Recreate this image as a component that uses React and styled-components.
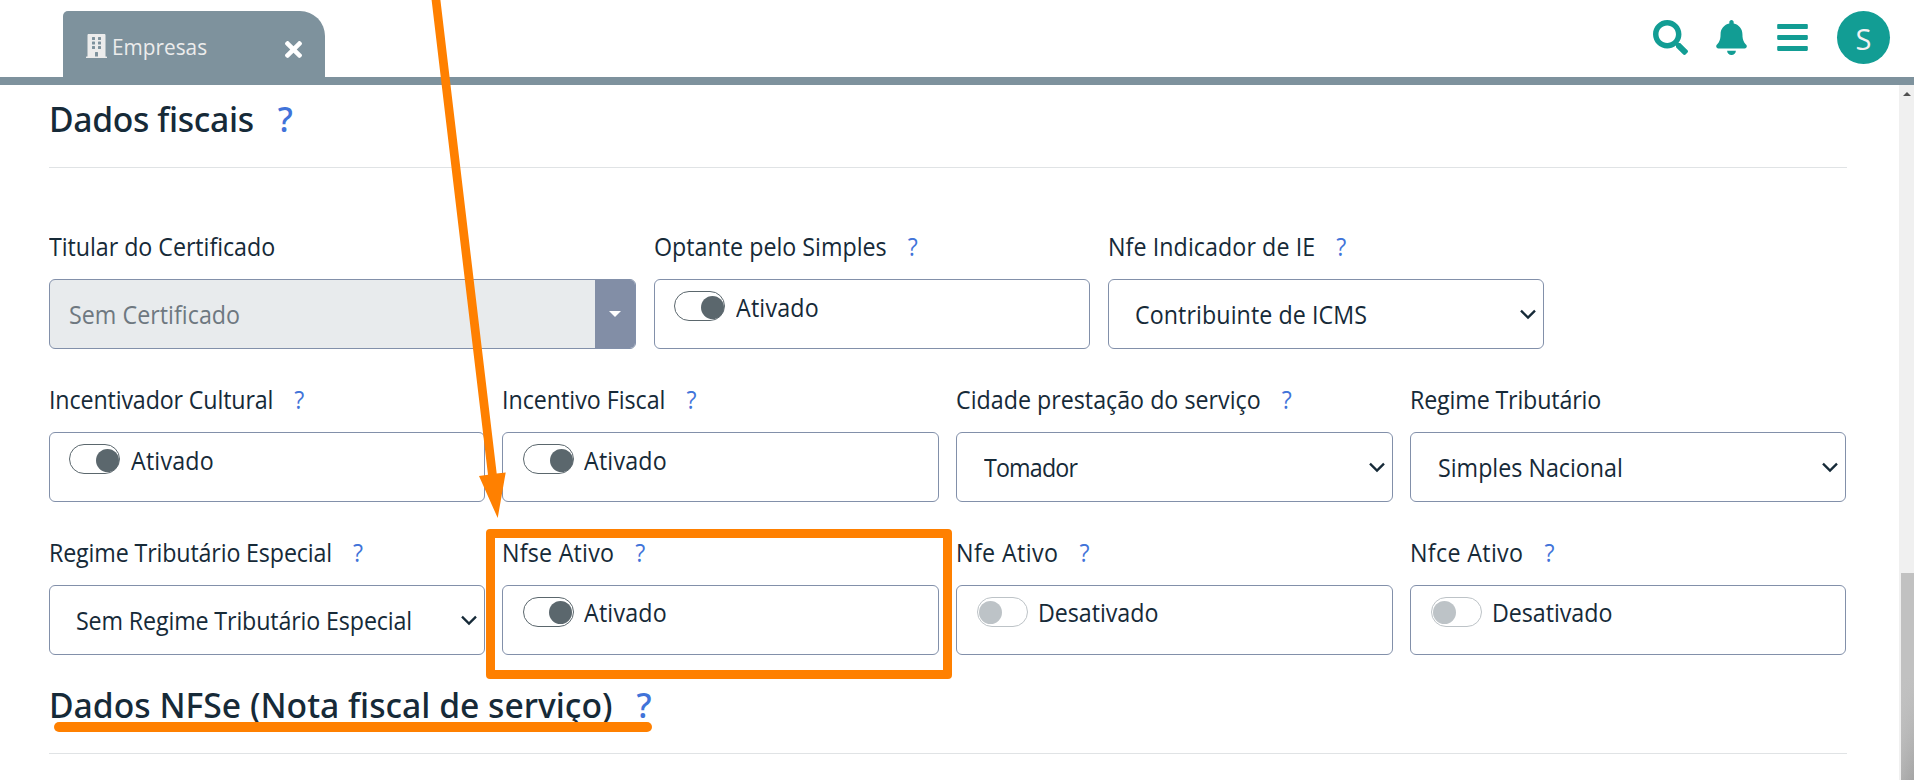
import React from 'react';
import styled, { createGlobalStyle } from 'styled-components';
import { FaSearch, FaBell, FaBars, FaBuilding, FaTimes } from 'react-icons/fa';

const GlobalStyle = createGlobalStyle`
  *, *::before, *::after { box-sizing: border-box; }
  body {
    margin: 0;
    background: #fff;
    color: #162a38;
    font-family: 'Open Sans', 'Noto Sans', sans-serif;
    font-size: 25px;
    line-height: 34px;
    overflow: hidden;
  }
`;

const Page = styled.div`
  position: relative;
  display: flex;
  flex-direction: column;
  height: 780px;
  overflow: hidden;
`;

const TopBar = styled.header`
  flex: none;
  display: flex;
  justify-content: space-between;
  height: 85px;
  padding: 11px 24px 0 63px;
  border-bottom: 8px solid #7e929d;
`;

const Tab = styled.div`
  display: flex;
  align-items: center;
  width: 262px;
  height: 66px;
  padding: 0 23px;
  border-radius: 5px 25px 0 0;
  background: #7e929d;
  color: #ececec;
`;

const TabIcon = styled(FaBuilding)`
  flex: none;
  width: 21px;
  height: 24px;
  margin: 4px 5px 0 0;
`;

const TabTitle = styled.span`
  flex: 1;
  margin-top: 6px;
  font-size: 22.6px;
  transform: scaleX(0.92);
  transform-origin: left;
`;

const TabClose = styled(FaTimes)`
  flex: none;
  width: 17px;
  height: 25px;
  margin-top: 11px;
  color: #fff;
`;

const Actions = styled.nav`
  display: flex;
  align-items: flex-start;
  color: #129d94;
`;

const ActionIcon = styled.span`
  display: flex;
  margin: 9px ${(p) => p.$gap}px 0 0;
  svg { width: ${(p) => p.$w}px; height: 35px; }
`;

const Avatar = styled.div`
  display: flex;
  align-items: center;
  justify-content: center;
  width: 53px;
  height: 53px;
  padding-top: 2px;
  border-radius: 50%;
  background: #129d94;
  color: #f2f2f2;
  font-size: 29px;
`;

const Body = styled.div`
  flex: 1;
  display: flex;
  min-height: 0;
`;

const Content = styled.main`
  flex: 1;
  min-width: 0;
  padding: 9px 52.3px 0 48.5px;
`;

const SectionTitle = styled.h2`
  display: flex;
  margin: 0;
  height: 74px;
  border-bottom: 1px solid #e0e3e5;
  font-family: 'Noto Sans', sans-serif;
  font-size: 35px;
  font-weight: 500;
  line-height: 49px;
  white-space: nowrap;
`;

const TitleText = styled.span`
  letter-spacing: ${(p) => p.$track || 0}px;
  transform: scaleX(0.962);
  transform-origin: left;
`;

const TitleHelp = styled.span`
  margin-left: 25px;
  color: #4173d9;
`;

const Rows = styled.div`
  display: grid;
  row-gap: 33px;
  padding: 61px 0 25px;
`;

const Row = styled.div`
  display: grid;
  grid-template-columns: ${(p) => p.$cols || 'repeat(4, 436.3px)'};
  column-gap: 17.6px;
`;

const Field = styled.div`
  display: grid;
  grid-template-rows: 34px 70px;
  row-gap: 16px;
  min-width: 0;
`;

const Narrow = styled.span`
  display: inline-block;
  white-space: nowrap;
  letter-spacing: ${(p) => p.$track || 0}px;
  transform: scaleX(0.93);
  transform-origin: left;
`;

const Label = styled(Narrow)`
  justify-self: start;
`;

const Help = styled.span`
  margin-left: 22.6px;
  letter-spacing: 0;
  color: #4173d9;
`;

const Box = styled.div`
  display: flex;
  align-items: center;
  height: 70px;
  border: 1px solid #8290aa;
  border-radius: 6px;
  background: #fff;
`;

const SelectBox = styled(Box)`
  justify-content: space-between;
  padding: 0 7px 0 26.6px;
`;

const ToggleBox = styled(Box)`
  align-items: flex-start;
  gap: 10.5px;
  padding: ${(p) => (p.$raised ? 9 : 10)}px 0 0 19.6px;
`;

const Switch = styled.span`
  flex: none;
  display: flex;
  justify-content: ${(p) => (p.$on ? 'flex-end' : 'flex-start')};
  width: 51px;
  height: 30px;
  margin-top: ${(p) => (p.$raised ? 2 : 1)}px;
  padding: ${(p) => (p.$raised ? 3 : 4)}px ${(p) => (p.$on && !p.$raised ? 0 : 1)}px 0 1.5px;
  border: 1px solid ${(p) => (p.$on ? '#5b676d' : '#bdc3c7')};
  border-radius: 15px;
`;

const Knob = styled.span`
  width: 23px;
  height: 23px;
  border-radius: 50%;
  background: ${(p) => (p.$on ? '#5b676d' : '#bdc3c7')};
`;

const DisabledBox = styled(Box)`
  justify-content: space-between;
  overflow: hidden;
  padding-left: 19px;
  background: #e8ebed;
  color: #6e7880;
`;

const DropButton = styled.span`
  display: flex;
  align-items: center;
  justify-content: center;
  width: 40px;
  height: 70px;
  background: #828ea6;
`;

const Caret = styled.span`
  border: 6px solid transparent;
  border-top-color: #fff;
  border-bottom: 0;
`;

const Scrollbar = styled.div`
  flex: none;
  display: flex;
  flex-direction: column;
  justify-content: space-between;
  align-items: flex-end;
  width: 15px;
  background: #f0f0f0;
`;

const ScrollUp = styled.span`
  margin: 7px 3px 0 0;
  border: 4px solid transparent;
  border-top: 0;
  border-bottom-color: #505050;
`;

const Thumb = styled.div`
  width: 13px;
  height: 207px;
  background: linear-gradient(100deg, #c1c1c1 40%, transparent), linear-gradient(#c1c1c1 50%, #a4a4a4);
`;

const Highlight = styled.div`
  position: absolute;
  left: 486px;
  top: 529px;
  width: 466px;
  height: 150px;
  border: 9px solid #ff8000;
  border-radius: 4px;
`;

const Underline = styled.div`
  position: absolute;
  left: 54px;
  top: 722px;
  width: 598px;
  height: 10px;
  border-radius: 5px;
  background: #ff8000;
`;

const Arrow = styled.svg`
  position: absolute;
  left: 0;
  top: 0;
  fill: #ff8000;
`;

function LabelText({ text, track, help }) {
  return (
    <Label $track={track}>
      {text}
      {help && <Help>?</Help>}
    </Label>
  );
}

function SelectField({ label, track, help, value, valueTrack }) {
  return (
    <Field>
      <LabelText text={label} track={track} help={help} />
      <SelectBox>
        <Narrow $track={valueTrack}>{value}</Narrow>
        <svg width="16" height="12" viewBox="0 0 16 12" fill="none" stroke="#162a38" strokeWidth="2.3">
          <path d="M1 2.6 L8 9.6 L15 2.6" />
        </svg>
      </SelectBox>
    </Field>
  );
}

function ToggleField({ label, track, on, raised }) {
  return (
    <Field>
      <LabelText text={label} track={track} help />
      <ToggleBox $raised={raised}>
        <Switch $on={on} $raised={raised}>
          <Knob $on={on} />
        </Switch>
        <Narrow $track={on ? 0.2 : -0.05}>{on ? 'Ativado' : 'Desativado'}</Narrow>
      </ToggleBox>
    </Field>
  );
}

export default function App() {
  return (
    <Page>
      <GlobalStyle />
      <TopBar>
        <Tab>
          <TabIcon />
          <TabTitle>Empresas</TabTitle>
          <TabClose />
        </Tab>
        <Actions>
          <ActionIcon $w={35} $gap={28}><FaSearch /></ActionIcon>
          <ActionIcon $w={31} $gap={30}><FaBell /></ActionIcon>
          <ActionIcon $w={31} $gap={29}><FaBars /></ActionIcon>
          <Avatar>S</Avatar>
        </Actions>
      </TopBar>
      <Body>
        <Content>
          <SectionTitle>
            <TitleText $track={-0.36}>
              Dados fiscais<TitleHelp>?</TitleHelp>
            </TitleText>
          </SectionTitle>
          <Rows>
            <Row $cols="587.6px 436.3px 436.3px">
              <Field>
                <LabelText text="Titular do Certificado" track={-0.05} />
                <DisabledBox>
                  <Narrow $track={0.03}>Sem Certificado</Narrow>
                  <DropButton><Caret /></DropButton>
                </DisabledBox>
              </Field>
              <ToggleField label="Optante pelo Simples" on />
              <SelectField label="Nfe Indicador de IE" track={0.08} help value="Contribuinte de ICMS" valueTrack={0.08} />
            </Row>
            <Row>
              <ToggleField label="Incentivador Cultural" track={-0.15} on />
              <ToggleField label="Incentivo Fiscal" track={-0.03} on />
              <SelectField label="Cidade prestação do serviço" help value="Tomador" valueTrack={-0.9} />
              <SelectField label="Regime Tributário" track={-0.17} value="Simples Nacional" />
            </Row>
            <Row>
              <SelectField label="Regime Tributário Especial" track={-0.16} help value="Sem Regime Tributário Especial" valueTrack={-0.15} />
              <ToggleField label="Nfse Ativo" track={0.25} on raised />
              <ToggleField label="Nfe Ativo" track={0.42} raised />
              <ToggleField label="Nfce Ativo" track={0.36} raised />
            </Row>
          </Rows>
          <SectionTitle>
            <TitleText>
              Dados NFSe (Nota fiscal de serviço)<TitleHelp>?</TitleHelp>
            </TitleText>
          </SectionTitle>
        </Content>
        <Scrollbar>
          <ScrollUp />
          <Thumb />
        </Scrollbar>
      </Body>
      <Arrow width="1914" height="780" viewBox="0 0 1914 780">
        <path d="M431.6 0 H440.4 L496.7 473.6 L505.7 472.5 L497.7 518 L479 476 L488 474.8 Z" />
      </Arrow>
      <Highlight />
      <Underline />
    </Page>
  );
}
